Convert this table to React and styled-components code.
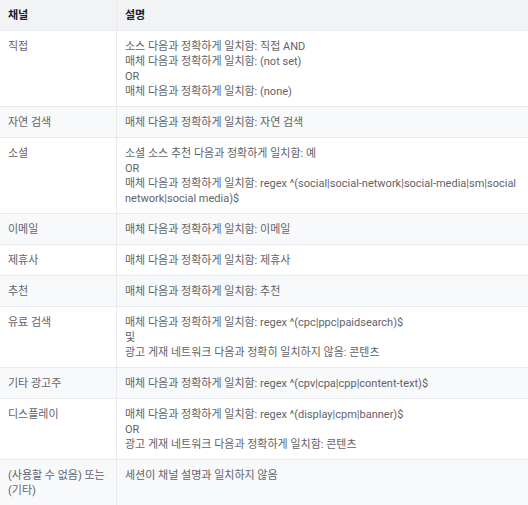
import React from 'react';
import styled, { createGlobalStyle } from 'styled-components';

const GlobalStyle = createGlobalStyle`
  html, body {
    margin: 0;
    padding: 0;
    background: #ffffff;
  }
  body {
    font-family: Roboto, "Noto Sans CJK KR", sans-serif;
  }
`;

const Table = styled.table`
  width: 528px;
  border-collapse: collapse;
  font-size: 11px;
  line-height: 15px;
  color: #5f6368;
`;

const HeadCell = styled.th`
  background: #f1f3f4;
  color: #202124;
  font-weight: 700;
  text-align: left;
  padding: 8px 8px 7px;
  border-bottom: 1px solid #e8eaed;
  border-left: ${({ first }) => (first ? 'none' : '1px solid #e8eaed')};
  width: ${({ first }) => (first ? '100px' : 'auto')};
`;

const Row = styled.tr`
  background: ${({ shaded }) => (shaded ? '#f8f9fa' : '#ffffff')};
`;

const Cell = styled.td`
  vertical-align: top;
  padding: 8px 8px 7px;
  border-bottom: 1px solid #e8eaed;
  border-left: ${({ first }) => (first ? 'none' : '1px solid #e8eaed')};
`;

const Line = styled.div``;

const rows = [
  ['직접', ['소스 다음과 정확하게 일치함: 직접 AND', '매체 다음과 정확하게 일치함: (not set)', 'OR', '매체 다음과 정확하게 일치함: (none)']],
  ['자연 검색', ['매체 다음과 정확하게 일치함: 자연 검색']],
  ['소셜', ['소셜 소스 추천 다음과 정확하게 일치함: 예', 'OR', '매체 다음과 정확하게 일치함: regex ^(social|social-network|social-media|sm|social network|social media)$']],
  ['이메일', ['매체 다음과 정확하게 일치함: 이메일']],
  ['제휴사', ['매체 다음과 정확하게 일치함: 제휴사']],
  ['추천', ['매체 다음과 정확하게 일치함: 추천']],
  ['유료 검색', ['매체 다음과 정확하게 일치함: regex ^(cpc|ppc|paidsearch)$', '및', '광고 게재 네트워크 다음과 정확히 일치하지 않음: 콘텐츠']],
  ['기타 광고주', ['매체 다음과 정확하게 일치함: regex ^(cpv|cpa|cpp|content-text)$']],
  ['디스플레이', ['매체 다음과 정확하게 일치함: regex ^(display|cpm|banner)$', 'OR', '광고 게재 네트워크 다음과 정확하게 일치함: 콘텐츠']],
  ['(사용할 수 없음) 또는 (기타)', ['세션이 채널 설명과 일치하지 않음']],
];

export default function App() {
  return (
    <>
      <GlobalStyle />
      <Table>
        <thead>
          <tr>
            <HeadCell first>채널</HeadCell>
            <HeadCell>설명</HeadCell>
          </tr>
        </thead>
        <tbody>
          {rows.map(([channel, lines], i) => (
            <Row key={channel} shaded={i % 2 === 1}>
              <Cell first>{channel}</Cell>
              <Cell>
                {lines.map((line, j) => (
                  <Line key={j}>{line}</Line>
                ))}
              </Cell>
            </Row>
          ))}
        </tbody>
      </Table>
    </>
  );
}
